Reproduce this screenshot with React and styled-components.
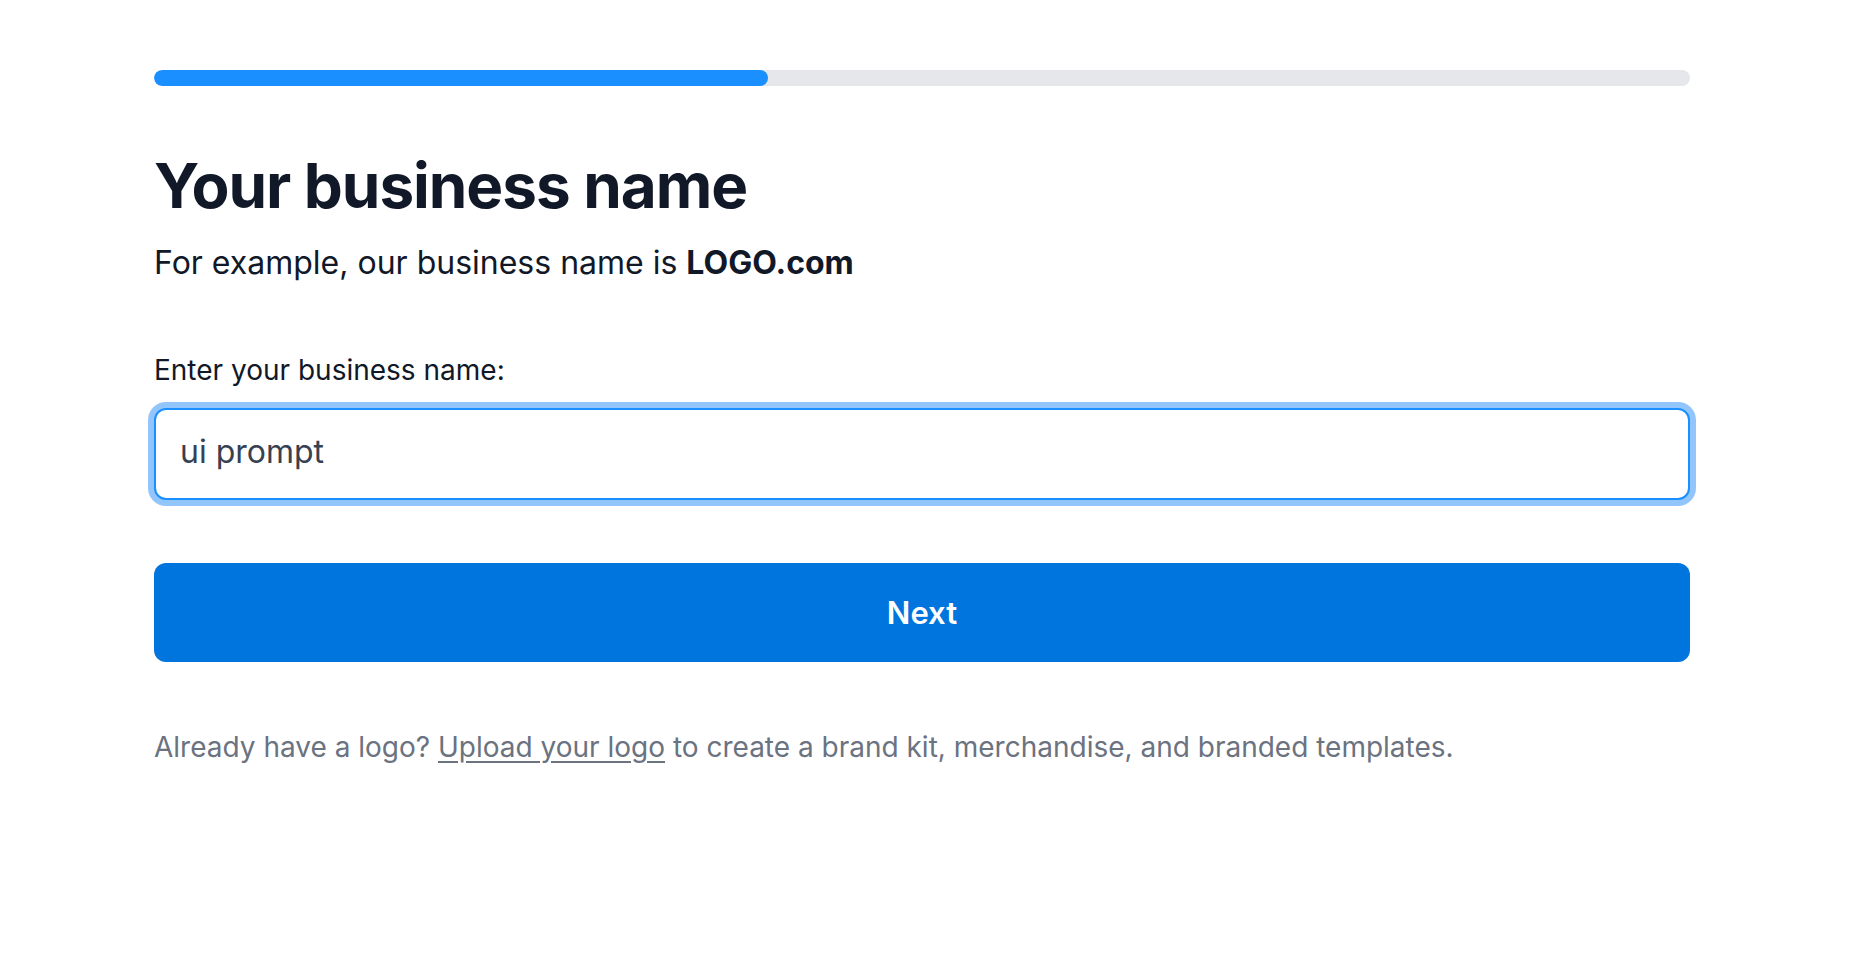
import React, { useState } from 'react';
import styled, { createGlobalStyle } from 'styled-components';

const GlobalStyle = createGlobalStyle`
  html, body {
    margin: 0;
    padding: 0;
    background: #ffffff;
  }
  body {
    font-family: Inter, "Noto Sans", "Liberation Sans", sans-serif;
    color: #111827;
    -webkit-font-smoothing: antialiased;
  }
`;

const Page = styled.div`
  padding: 70px 0 0 154px;
`;

const Container = styled.div`
  width: 1536px;
  display: flex;
  flex-direction: column;
`;

const Track = styled.div`
  height: 16px;
  border-radius: 9999px;
  background-color: #e5e7eb;
  overflow: hidden;
`;

const Fill = styled.div`
  height: 100%;
  border-radius: 9999px;
  background-color: #1a8fff;
`;

const Title = styled.h1`
  margin: 69px 0 0;
  font-size: 62px;
  line-height: 1;
  font-weight: 700;
  letter-spacing: -0.017em;
  color: #111827;
`;

const Subtitle = styled.p`
  margin: 26px 0 0;
  font-size: 32px;
  color: #111827;

  strong {
    font-weight: 700;
  }
`;

const Label = styled.label`
  margin-top: 71px;
  font-size: 28px;
  color: #111827;
`;

const Field = styled.input`
  box-sizing: border-box;
  margin-top: 21px;
  width: 100%;
  height: 92px;
  padding: 0 24px 6px;
  border: 2px solid #1a8fff;
  border-radius: 12px;
  outline: none;
  box-shadow: 0 0 0 6px #93c5fd;
  font-family: inherit;
  font-size: 32px;
  color: #374151;
  caret-color: #111827;
`;

const NextButton = styled.button`
  margin-top: 63px;
  height: 99px;
  border: none;
  border-radius: 12px;
  background-color: #0075de;
  color: #ffffff;
  font-family: inherit;
  font-size: 31px;
  font-weight: 600;
  cursor: pointer;
`;

const Footnote = styled.p`
  margin: 68px 0 0;
  font-size: 28px;
  color: #6b7280;

  a {
    color: #6b7280;
    text-decoration: underline;
    text-underline-offset: 4px;
  }
`;

export default function App() {
  const [name, setName] = useState('ui prompt');
  const progress = 40;

  return (
    <Page>
      <GlobalStyle />
      <Container>
        <Track>
          <Fill style={{ width: `${progress}%` }} />
        </Track>
        <Title>Your business name</Title>
        <Subtitle>
          For example, our business name is <strong>LOGO.com</strong>
        </Subtitle>
        <Label htmlFor="business-name">Enter your business name:</Label>
        <Field
          id="business-name"
          value={name}
          autoFocus
          onChange={(e) => setName(e.target.value)}
        />
        <NextButton>Next</NextButton>
        <Footnote>
          Already have a logo? <a href="#upload">Upload your logo</a> to create a brand kit,
          merchandise, and branded templates.
        </Footnote>
      </Container>
    </Page>
  );
}
